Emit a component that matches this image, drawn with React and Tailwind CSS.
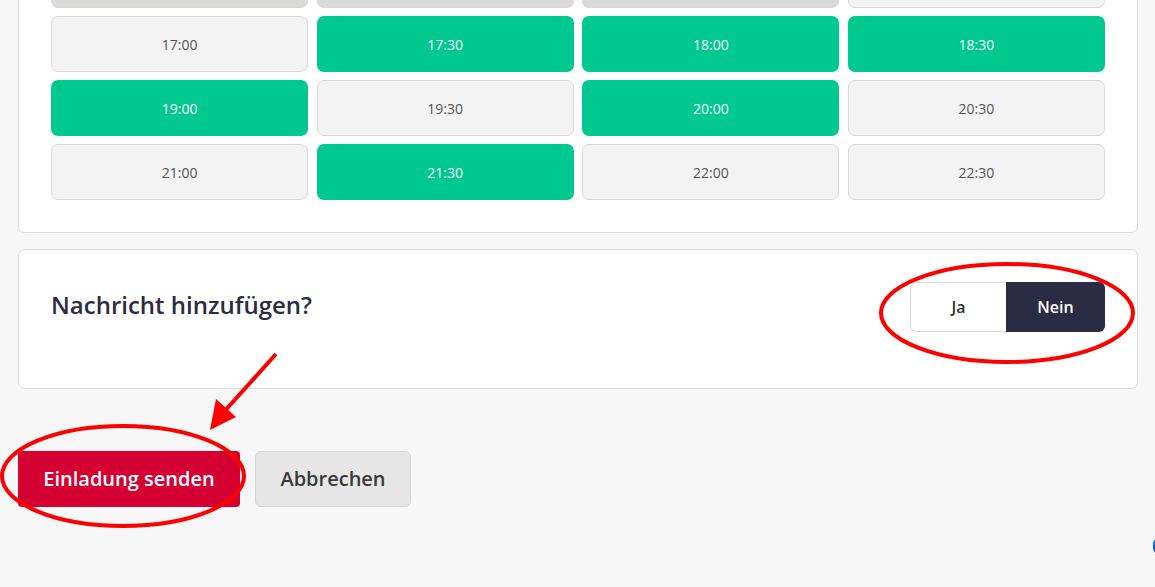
import React from "react";

const rows = [
  [
    { t: "", s: "dis" },
    { t: "", s: "dis" },
    { t: "", s: "dis" },
    { t: "", s: "off" },
  ],
  [
    { t: "17:00", s: "off" },
    { t: "17:30", s: "on" },
    { t: "18:00", s: "on" },
    { t: "18:30", s: "on" },
  ],
  [
    { t: "19:00", s: "on" },
    { t: "19:30", s: "off" },
    { t: "20:00", s: "on" },
    { t: "20:30", s: "off" },
  ],
  [
    { t: "21:00", s: "off" },
    { t: "21:30", s: "on" },
    { t: "22:00", s: "off" },
    { t: "22:30", s: "off" },
  ],
];

function Slot({ t, s }) {
  if (s === "on")
    return (
      <div className="h-[56px] rounded-[7px] bg-[#00c98f] flex items-center justify-center text-[14px] text-white">
        {t}
      </div>
    );
  if (s === "dis")
    return (
      <div className="h-[56px] rounded-[7px] bg-[#dadad9] border border-[#d6d6d6] flex items-center justify-center text-[14px] text-[#777]">
        {t}
      </div>
    );
  return (
    <div className="h-[56px] rounded-[7px] bg-[#f3f3f3] border border-[#d9d9d9] flex items-center justify-center text-[14px] text-[#555]">
      {t}
    </div>
  );
}

export default function App() {
  return (
    <div
      className="relative w-[1155px] h-[587px] overflow-hidden bg-[#f7f7f7]"
      style={{ fontFamily: "'Open Sans', 'Noto Sans', sans-serif" }}
    >
      <div className="px-[18px] mr-[-1px]">
        <div className="mt-[-81px] bg-white border border-[#dcdcdc] rounded-[7px] px-[32px] pt-[32px] pb-[32px]">
          <div className="grid grid-cols-4 gap-x-[8.5px] gap-y-[8px]">
            {rows.flat().map((c, i) => (
              <Slot key={i} {...c} />
            ))}
          </div>
        </div>

        <div className="mt-[16px] bg-white border border-[#dcdcdc] rounded-[7px] pl-[32px] pr-[32px] pt-[32px] pb-[56px] flex items-start justify-between">
          <div className="text-[24px] font-semibold text-[#2b2b43] leading-[32px] mt-[7px]">
            Nachricht hinzufügen?
          </div>
          <div className="flex h-[50px] w-[195px] rounded-[6px] overflow-hidden">
            <div className="w-[96px] flex items-center justify-center bg-white border border-[#d9d9d9] border-r-0 rounded-l-[6px] text-[16px] font-semibold text-[#333]">
              Ja
            </div>
            <div className="flex-1 flex items-center justify-center bg-[#2b2b43] text-[16px] font-semibold text-white">
              Nein
            </div>
          </div>
        </div>

        <div className="mt-[62px] flex gap-[15px]">
          <button className="h-[56px] w-[222px] rounded-[4px] bg-[#d50032] text-white text-[20px] font-semibold">
            Einladung senden
          </button>
          <button className="h-[56px] w-[156px] rounded-[6px] bg-[#e6e6e6] border border-[#d6d6d6] text-[#3a3a3a] text-[20px] font-semibold">
            Abbrechen
          </button>
        </div>
      </div>

      <div className="absolute left-[1153px] top-[538px] w-[6px] h-[16px] rounded-l-full bg-[#1a5cff]" />

      <svg
        className="absolute inset-0 pointer-events-none"
        width="1155"
        height="587"
        viewBox="0 0 1155 587"
      >
        <ellipse cx="1007" cy="313" rx="126" ry="49" fill="none" stroke="#ff0000" strokeWidth="4" />
        <ellipse cx="123" cy="476" rx="121" ry="50" fill="none" stroke="#ff0000" strokeWidth="4" />
        <line x1="276" y1="354" x2="222" y2="414" stroke="#ff0000" strokeWidth="4" />
        <polygon points="210,430 216,399 236,417" fill="#ff0000" />
      </svg>
    </div>
  );
}
